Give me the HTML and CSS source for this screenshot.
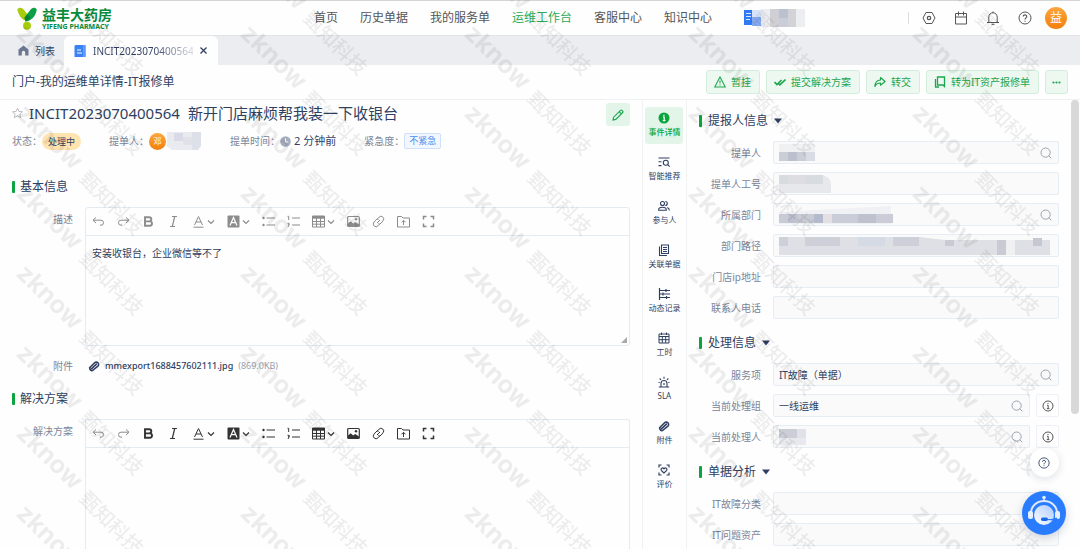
FILE: index.html
```html
<!DOCTYPE html>
<html lang="zh-CN">
<head>
<meta charset="utf-8">
<meta name="viewport" content="width=device-width, initial-scale=1">
<title>IT报修单</title>
<link rel="stylesheet" href="styles.css">
</head>
<body>
<svg class="sprite" aria-hidden="true">
  <symbol id="i-search" viewBox="0 0 12 12"><circle cx="5.6" cy="5.6" r="4.6" fill="none" stroke="currentColor"/><path d="M9 9l2 2" stroke="currentColor" stroke-linecap="round"/></symbol>
  <symbol id="i-info" viewBox="0 0 12 12"><circle cx="6" cy="6" r="5" fill="none" stroke="currentColor"/><path d="M5 5.3h1.2v3.2M4.8 8.6h2.6M6 3v1" fill="none" stroke="currentColor"/></symbol>
  <symbol id="i-help" viewBox="0 0 14 14"><circle cx="7" cy="7" r="6" fill="none" stroke="currentColor"/><path d="M5.2 5.6c0-2.4 3.7-2.3 3.6 0C8.800 6.800 7 7 7 8.500M7 9.700v1" fill="none" stroke="currentColor" stroke-width="1.100"/></symbol>
  <symbol id="i-caret" viewBox="0 0 8 6"><path d="M0 0.500h8L4 5.500z" fill="currentColor"/></symbol>
  <symbol id="i-clip" viewBox="0 0 12 12"><path d="M1.600 7.800L6.600 2.800a2.300 2.300 0 0 1 3.300 3.300L5.200 10a2 2 0 0 1-3-2.600M3.700 8.600L8.400 4.200" fill="none" stroke="currentColor" stroke-width="1.600" stroke-linecap="round"/></symbol>
  <symbol id="e-undo" viewBox="0 0 13 13"><path d="M4 2.500L1 5.200 4 8M1.200 5.200H9a2.500 2.500 0 0 1 0 5H8" fill="none" stroke="currentColor"/></symbol>
  <symbol id="e-redo" viewBox="0 0 13 13"><path d="M9 2.500l3 2.700L9 8M11.800 5.200H4a2.500 2.500 0 0 0 0 5h1" fill="none" stroke="currentColor"/></symbol>
  <symbol id="e-bold" viewBox="0 0 13 13"><path d="M3 2.200h4.200a2 2 0 0 1 0 4.200H3zM3 6.400h4.800a2.200 2.200 0 0 1 0 4.400H3z" fill="none" stroke="currentColor" stroke-width="1.900"/></symbol>
  <symbol id="e-italic" viewBox="0 0 13 13"><path d="M5 1.500h5M3 11.500h5M7.700 1.500L5.300 11.500" fill="none" stroke="currentColor" stroke-width="1.200"/></symbol>
  <symbol id="e-color" viewBox="0 0 13 13"><path d="M2.500 10L6.500 1.500 10.500 10M4 7h5M1.500 12.200h10" fill="none" stroke="currentColor"/></symbol>
  <symbol id="e-fill" viewBox="0 0 13 13"><rect x=".5" y=".5" width="12" height="12" rx="1" fill="currentColor"/><path d="M3 10.500L6.500 2.500 10 10.500M4.200 7.700h4.600" fill="none" stroke="#fff" stroke-width="1.200"/></symbol>
  <symbol id="e-ul" viewBox="0 0 13 13"><path d="M4.500 3H13M4.500 10H13" stroke="currentColor" stroke-width="1.200"/><circle cx="1.500" cy="3" r="1.200" fill="currentColor"/><circle cx="1.500" cy="10" r="1.200" fill="currentColor"/></symbol>
  <symbol id="e-ol" viewBox="0 0 13 13"><path d="M5 3h8M5 10h8" stroke="currentColor" stroke-width="1.200"/><path d="M.5 1.300h1.200v3.700M.5 8.300h1.700v1.500H1M2.200 9.800L1 12" fill="none" stroke="currentColor"/></symbol>
  <symbol id="e-table" viewBox="0 0 13 13"><path d="M.5 1h12v11H.5zM.5 6.500h12M.5 9.200h12M4.500 2v10M8.500 2v10" fill="none" stroke="currentColor"/><path d="M.5 1h12v2.700H.5z" fill="currentColor"/></symbol>
  <symbol id="e-image" viewBox="0 0 13 13"><rect x=".7" y="1.500" width="11.600" height="10" rx="1" fill="none" stroke="currentColor" stroke-width="1.200"/><path d="M1 11V8.500l2.700-2.300 2.500 2.300 2-1.500L12 9.500V11z" fill="currentColor"/><circle cx="9" cy="4.300" r="1.200" fill="currentColor"/></symbol>
  <symbol id="e-link" viewBox="0 0 13 13"><path d="M5.200 4L7 2.200a2.600 2.600 0 0 1 4 3.600L9 8.200a2.400 2.400 0 0 1-2.700.500M7.800 9L6 10.800a2.600 2.600 0 0 1-4-3.600l2-2.400a2.400 2.400 0 0 1 2.700-.500M5 8l3-3" fill="none" stroke="currentColor"/></symbol>
  <symbol id="e-folder" viewBox="0 0 13 13"><path d="M.5 1.500h4l1.500 1.500h6.500v9H.5zM6.500 10V5.500M4.500 7.300l2-2 2 2" fill="none" stroke="currentColor"/></symbol>
  <symbol id="e-full" viewBox="0 0 13 13"><path d="M1.500 4.500v-3h3M8.500 1.500h3v3M11.500 8.500v3h-3M4.500 11.500h-3v-3" fill="none" stroke="currentColor" stroke-width="1.500"/></symbol>
  <symbol id="e-down" viewBox="0 0 8 8"><path d="M1 2.500l3 3 3-3" fill="none" stroke="currentColor" stroke-width="1.200"/></symbol>
</svg>

<header class="top">
  <a class="brand" href="#" aria-label="益丰大药房">
    <svg width="20" height="23" viewBox="0 0 20 23"><path d="M.3 2.500C1.500.2 5 .2 7 3l4 5-3.500 5.500C4.500 12 1.300 7.500.3 2.500z" fill="#a7cc0b"/><path d="M19.800 2.500C18.500.2 15.300.2 13.300 3L8.500 9v5.500c5.500-.5 10.300-5 11.300-12z" fill="#0c9f45"/><path d="M7.300 10.500L11 7.500l2.500 3.500-5 3.500z" fill="#087f36"/><circle cx="10" cy="18.700" r="4" fill="#a7cc0b"/></svg>
    <span class="brand-text"><b>益丰大药房</b><small>YIFENG PHARMACY</small></span>
  </a>
  <nav class="nav">
    <a href="#">首页</a><a href="#">历史单据</a><a href="#">我的服务单</a><a class="on" href="#">运维工作台</a><a href="#">客服中心</a><a href="#">知识中心</a>
    <a class="masked" href="#" aria-label="项目"><svg width="62" height="18" viewBox="0 0 62 18"><path d="M0 1h9v15H0z" fill="#2f7bf5"/><path d="M2 4h5v1H2zM2 7h5v1H2zM2 10h4v1H2z" fill="#d8e7ff"/><path d="M8 1h9v7H8z" fill="#d6e2f7"/><path d="M8 8h9v9H8z" fill="#86aaf0"/><path d="M17 0h9v18h-9z" fill="#eceef3"/><path d="M26 0h9v18h-9z" fill="#cfcfd4"/><path d="M35 0h9v9h-9z" fill="#bac2d2"/><path d="M35 9h9v9h-9z" fill="#c9cdd7"/><path d="M44 0h8v18h-8z" fill="#d2d2d7"/><path d="M52 0h9v18h-9z" fill="#edeef1"/></svg></a>
  </nav>
  <div class="tools">
    <button aria-label="设置"><svg width="14" height="14" viewBox="0 0 14 14"><path d="M4 1.500h6L13 7l-3 5.500H4L1 7z" fill="none" stroke="currentColor" stroke-linejoin="round"/><circle cx="7" cy="7" r="1.700" fill="none" stroke="currentColor" stroke-width="1.200"/></svg></button>
    <button aria-label="日历"><svg width="14" height="14" viewBox="0 0 14 14"><path d="M1.500 2.500h11v10.500h-11zM1.500 6h11M4.500.5v4M9.500.5v4" fill="none" stroke="currentColor"/></svg></button>
    <button aria-label="通知"><svg width="14" height="14" viewBox="0 0 14 14"><path d="M1 11.500h12M2.800 11.500V6a4.200 4.200 0 0 1 8.400 0v5.500M5.500 13.300h3M7 .5v1.500" fill="none" stroke="currentColor"/></svg></button>
    <button aria-label="帮助"><svg width="14" height="14"><use href="#i-help"/></svg></button>
    <span class="avatar">益</span>
  </div>
</header>

<div class="tabs">
  <a class="tab" href="#"><svg width="11" height="11" viewBox="0 0 11 11"><path d="M5.500.5L10.500 4.500V10.500H7.200V7.500a1.700 1.700 0 0 0-3.400 0v3H.5V4.500z" fill="#6b7690"/></svg>列表</a>
  <div class="tab current"><svg width="12" height="12" viewBox="0 0 12 12"><path d="M1.500 0h10v12H.5V1z" fill="#3a82fa"/><path d="M3 5h4M3 8h5" stroke="#fff" stroke-width="1"/><path d="M9 0h2.500v12H9z" fill="#5c9bff"/></svg><span>INCIT2023070400564</span><button aria-label="关闭"><svg width="7" height="7" viewBox="0 0 7 7"><path d="M.5.5l6 6M6.500.5l-6 6" stroke="currentColor" stroke-width="1.300"/></svg></button></div>
</div>

<div class="bar">
  <h2>门户-我的运维单详情-IT报修单</h2>
  <div class="actions">
    <button class="act"><svg width="12" height="12" viewBox="0 0 12 12"><path d="M6 1l5.300 10H.7zM6 4.500v3M6 8.600v1" fill="none" stroke="currentColor" stroke-width="1.100"/></svg>暂挂</button>
    <button class="act"><svg width="12" height="12" viewBox="0 0 12 12"><path d="M.5 6l2.500 2.500L7.500 4M4.500 7.500l1.300 1.300L11.500 3.500" fill="none" stroke="currentColor" stroke-width="1.600"/></svg>提交解决方案</button>
    <button class="act"><svg width="12" height="12" viewBox="0 0 12 12"><path d="M6.500 1.500L11 5.500 6.500 9.200V7C4 7 2 8 1 10.500 1 6.500 3 4.200 6.500 4z" fill="none" stroke="currentColor" stroke-width="1.200" stroke-linejoin="round"/></svg>转交</button>
    <button class="act"><svg width="12" height="12" viewBox="0 0 12 12"><path d="M3.500 1h7v9.500L9 9H3.500zM1.500 3v8H5" fill="none" stroke="currentColor" stroke-width="1.300"/></svg>转为IT资产报修单</button>
    <button class="act more" aria-label="更多"><svg width="9" height="3" viewBox="0 0 9 3"><circle cx="1.500" cy="1.500" r="1.100" fill="currentColor"/><circle cx="4.500" cy="1.500" r="1.100" fill="currentColor"/><circle cx="7.500" cy="1.500" r="1.100" fill="currentColor"/></svg></button>
  </div>
</div>

<div class="work">
  <main class="main">
    <div class="title">
      <svg class="star" width="11" height="20" viewBox="0 0 12 12"><path d="M6 .8l1.600 3.500 3.800.4-2.800 2.600.8 3.800L6 9.200l-3.400 1.900.8-3.800L.6 4.700l3.800-.4z" fill="none" stroke="#b4b8bf"/></svg>
      <h1><span>INCIT2023070400564</span><span>新开门店麻烦帮我装一下收银台</span></h1>
      <button class="edit" aria-label="编辑"><svg width="12" height="12" viewBox="0 0 12 12"><path d="M1 11l.6-2.800L8.500 1.300a1 1 0 0 1 1.400 0l.8.800a1 1 0 0 1 0 1.400L3.800 10.400zM7.200 2.700l2.100 2.100" fill="none" stroke="currentColor" stroke-width="1.100"/></svg></button>
    </div>
    <div class="meta">
      <div>状态：<span class="state">处理中</span></div>
      <div>提单人：<span class="mini">邓</span><svg width="36" height="18" viewBox="0 0 36 18"><path d="M1 0h34v14l-4 4H6L1 14z" fill="#e9ebf0"/><path d="M8 1h9v8H8z" fill="#d9dae6"/><path d="M26 0h9v14l-3 4h-6z" fill="#dde0e9"/><path d="M17 5h9v8h-9z" fill="#e0e2e9"/></svg></div>
      <div>提单时间：<span class="when"><svg width="11" height="11" viewBox="0 0 11 11"><circle cx="5.500" cy="5.500" r="5.300" fill="#a5adbd"/><path d="M5.500 2.500V6h2.700" fill="none" stroke="#fff"/></svg>2 分钟前</span></div>
      <div>紧急度：<span class="urgency">不紧急</span></div>
    </div>

    <h3 class="sec">基本信息</h3>
    <div class="row">
      <label for="desc">描述</label>
      <div class="editor soft">
        <div class="etools">
          <button aria-label="撤销"><svg><use href="#e-undo"/></svg></button><button aria-label="重做"><svg><use href="#e-redo"/></svg></button><button aria-label="加粗"><svg><use href="#e-bold"/></svg></button><button aria-label="斜体"><svg><use href="#e-italic"/></svg></button><button aria-label="文字颜色"><svg><use href="#e-color"/></svg><svg class="dn"><use href="#e-down"/></svg></button><button aria-label="背景颜色"><svg><use href="#e-fill"/></svg><svg class="dn"><use href="#e-down"/></svg></button><button aria-label="无序列表"><svg><use href="#e-ul"/></svg></button><button aria-label="有序列表"><svg><use href="#e-ol"/></svg></button><button aria-label="表格"><svg><use href="#e-table"/></svg><svg class="dn"><use href="#e-down"/></svg></button><button aria-label="图片"><svg><use href="#e-image"/></svg></button><button aria-label="链接"><svg><use href="#e-link"/></svg></button><button aria-label="上传"><svg><use href="#e-folder"/></svg></button><button aria-label="全屏"><svg><use href="#e-full"/></svg></button>
        </div>
        <textarea id="desc">安装收银台，企业微信等不了</textarea>
        <i class="grip"></i>
      </div>
    </div>
    <div class="row attach">
      <span class="lbl">附件</span>
      <div class="file"><svg width="12" height="12"><use href="#i-clip"/></svg><a href="#">mmexport1688457602111.jpg</a><span>(869.0KB)</span></div>
    </div>
    <h3 class="sec second">解决方案</h3>
    <div class="row fill">
      <label for="plan">解决方案</label>
      <div class="editor">
        <div class="etools">
          <button class="off" aria-label="撤销"><svg><use href="#e-undo"/></svg></button><button class="off" aria-label="重做"><svg><use href="#e-redo"/></svg></button><button aria-label="加粗"><svg><use href="#e-bold"/></svg></button><button aria-label="斜体"><svg><use href="#e-italic"/></svg></button><button aria-label="文字颜色"><svg><use href="#e-color"/></svg><svg class="dn"><use href="#e-down"/></svg></button><button aria-label="背景颜色"><svg><use href="#e-fill"/></svg><svg class="dn"><use href="#e-down"/></svg></button><button aria-label="无序列表"><svg><use href="#e-ul"/></svg></button><button aria-label="有序列表"><svg><use href="#e-ol"/></svg></button><button aria-label="表格"><svg><use href="#e-table"/></svg><svg class="dn"><use href="#e-down"/></svg></button><button aria-label="图片"><svg><use href="#e-image"/></svg></button><button aria-label="链接"><svg><use href="#e-link"/></svg></button><button aria-label="上传"><svg><use href="#e-folder"/></svg></button><button aria-label="全屏"><svg><use href="#e-full"/></svg></button>
        </div>
        <textarea id="plan"></textarea>
      </div>
    </div>
  </main>

  <nav class="rail">
    <button class="on"><svg viewBox="0 0 12 12"><circle cx="6" cy="6" r="5.500" fill="currentColor"/><path d="M5 5.200h1.200V8.500M4.800 8.700h2.600M5.900 2.700v1.300" fill="none" stroke="#fff" stroke-width="1.200"/></svg>事件详情</button>
    <button><svg viewBox="0 0 12 12"><path d="M.5 2h11M.5 5.800h3M.5 9.600h3M9.700 8.700l2 2" stroke="currentColor" stroke-width="1.100"/><circle cx="7.800" cy="6.800" r="2.500" fill="none" stroke="currentColor" stroke-width="1.100"/></svg>智能推荐</button>
    <button><svg viewBox="0 0 12 12"><circle cx="4.500" cy="3.500" r="2" fill="none" stroke="currentColor" stroke-width="1.100"/><path d="M.7 10.300V9.500c0-3 7.600-3 7.600 0v.8zM7.300 1.500a2 2 0 0 1 0 4M9.300 7.500c1.500.5 2 1.300 2 3" fill="none" stroke="currentColor" stroke-width="1.100"/></svg>参与人</button>
    <button><svg viewBox="0 0 12 12"><path d="M3.500 1h7v8.500h-7zM1.500 2.500v9H9M5 3.500h4M5 5.500h4M5 7.500h4" fill="none" stroke="currentColor" stroke-width="1.100"/></svg>关联单据</button>
    <button><svg viewBox="0 0 12 12"><path d="M1.500 0v12M1.500 2.500H12M1.500 6H12M1.500 9.500H12M8 1v3M5 4.500v3M8.500 8v3" fill="none" stroke="currentColor" stroke-width="1.200"/></svg>动态记录</button>
    <button><svg viewBox="0 0 12 12"><path d="M1 2h10v9H1zM1 4.500h10M1 7.700h10M4.300 4v7M7.700 4v7M3.500.5V3M8.500.5V3" fill="none" stroke="currentColor"/></svg>工时</button>
    <button><svg viewBox="0 0 12 12"><path d="M.8 11h10.400M3 11V7.500a3 3 0 0 1 6 0V11M6 .8v2M1.700 2.500l1.300 1.300M10.300 2.500L9 3.800M6 7v2M.5 6.500h1.200M10.300 6.500h1.200" fill="none" stroke="currentColor" stroke-width="1.100"/></svg>SLA</button>
    <button><svg><use href="#i-clip"/></svg>附件</button>
    <button><svg viewBox="0 0 12 12"><path d="M1 3.500V1h2.500M8.500 1H11v2.500M11 8.500V11H8.500M3.500 11H1V8.500" fill="none" stroke="currentColor" stroke-width="1.200"/><path d="M6 9L3.300 6.300C2.300 4.500 4.700 3 6 4.800 7.300 3 9.700 4.500 8.700 6.300z" fill="none" stroke="currentColor" stroke-width="1.200"/></svg>评价</button>
  </nav>

  <aside class="side">
    <div class="form">
      <h3 class="sec">提报人信息 <button aria-label="收起"><svg width="8" height="6"><use href="#i-caret"/></svg></button></h3>
      <div class="fields">
        <label for="f1">提单人</label><div class="field"><svg class="mask" width="36" height="18"><path d="M0 0h36v9H0z" fill="#eff1f3"/><path d="M0 8h9v9H0z" fill="#cbcdd7"/><path d="M9 8h9v9H9z" fill="#bcc1cd"/><path d="M18 8h9v9h-9z" fill="#cbced8"/><path d="M27 8h9v9h-9z" fill="#d9dbe5"/></svg><input id="f1"><svg class="mag"><use href="#i-search"/></svg></div>
        <label for="f2">提单人工号</label><div class="field"><svg class="mask" width="52" height="18"><path d="M0 0h44q8 3 8 9v9H0z" fill="#e6e8eb"/><path d="M0 0h9v9H0zM26 0h18v9H26z" fill="#d8dbdf"/><path d="M9 0h17v9H9z" fill="#dedee2"/></svg><input id="f2"></div>
        <label for="f3">所属部门</label><div class="field"><svg class="mask" width="114" height="18"><path d="M0 6L112 0v18H0z" fill="#f0f1f4"/><path d="M0 8h35v9H0z" fill="#c9cbd4"/><path d="M9 8h9v9H9zM79 8h18v9H79z" fill="#bec1ce"/><path d="M35 8h9v9h-9z" fill="#b3bbcc"/><path d="M44 8h9v9h-9z" fill="#e3dfe3"/><path d="M53 8h26v9H53zM97 8h17v9H97z" fill="#cacdd8"/></svg><input id="f3"><svg class="mag"><use href="#i-search"/></svg></div>
        <label for="f4">部门路径</label><div class="field"><svg class="mask" width="272" height="19"><path d="M0 1h140l26 3h105v15H0z" fill="#dfe0e5"/><path d="M0 1h9v9H0zM26 1h35v9H26zM114 1h26v9h-26z" fill="#ced0d9"/><path d="M79 1h27v9H79z" fill="#d5dbe4"/><path d="M166 4h9v6h-9zM218 4h9v15h-9z" fill="#c8cad4"/><path d="M254 2h9v8h-9z" fill="#c5c7d1"/><path d="M227 4h9v15h-9z" fill="#f0f0f3"/></svg><input id="f4"></div>
        <label for="f5">门店ip地址</label><div class="field"><input id="f5"></div>
        <label for="f6">联系人电话</label><div class="field"><input id="f6"></div>
      </div>
      <h3 class="sec">处理信息 <button aria-label="收起"><svg width="8" height="6"><use href="#i-caret"/></svg></button></h3>
      <div class="fields">
        <label for="f7">服务项</label><div class="field"><input id="f7" value="IT故障（单据）"><svg class="mag"><use href="#i-search"/></svg></div>
        <label for="f8">当前处理组</label><div class="pair"><div class="field"><input id="f8" value="一线运维"><svg class="mag"><use href="#i-search"/></svg></div><button class="info" aria-label="详情"><svg width="12" height="12"><use href="#i-info"/></svg></button></div>
        <label for="f9">当前处理人</label><div class="pair"><div class="field"><svg class="mask" width="27" height="16"><path d="M0 0h18v9H0z" fill="#ccced7"/><path d="M18 0h9v9h-9z" fill="#e0e2e8"/><path d="M0 9h27v7H0z" fill="#e8e9ee"/></svg><input id="f9"><svg class="mag"><use href="#i-search"/></svg></div><button class="info" aria-label="详情"><svg width="12" height="12"><use href="#i-info"/></svg></button></div>
      </div>
      <h3 class="sec">单据分析 <button aria-label="收起"><svg width="8" height="6"><use href="#i-caret"/></svg></button></h3>
      <div class="fields">
        <label for="f10">IT故障分类</label><div class="field"><input id="f10"></div>
        <label for="f11">IT问题资产</label><div class="field"><input id="f11"></div>
      </div>
    </div>
    <div class="scroll"><i></i></div>
  </aside>
</div>

<svg class="watermark" aria-hidden="true">
  <defs>
    <g id="wm"><text class="wm-en" transform="translate(15 35) rotate(44)">z<tspan class="wm-k">k</tspan>now</text><text class="wm-cn" transform="translate(78 100) rotate(45)">甄知科技</text></g>
    <pattern id="wmp" width="224" height="80" patternUnits="userSpaceOnUse"><use href="#wm"/><use href="#wm" y="-80"/><use href="#wm" y="-160"/></pattern>
  </defs>
  <rect width="100%" height="100%" fill="url(#wmp)"/>
</svg>

<div class="float">
  <button class="ask" aria-label="帮助"><svg width="12" height="12"><use href="#i-help"/></svg></button>
  <button class="bot" aria-label="智能客服"><svg width="44" height="44" viewBox="0 0 44 44"><defs><linearGradient id="face" x1="0" y1="1" x2="1" y2="0"><stop offset="0" stop-color="#fff"/><stop offset="1" stop-color="#aecbff"/></linearGradient></defs><path d="M9 22a13 12 0 0 1 26 0" fill="none" stroke="#dfeaff" stroke-width="2"/><path d="M22 11V7" stroke="#dfeaff" stroke-width="1.500"/><circle cx="22" cy="6.500" r="1.800" fill="#dfeaff"/><rect x="6" y="20" width="5" height="8" rx="2" fill="#e8f0ff"/><rect x="33" y="20" width="5" height="8" rx="2" fill="#e8f0ff"/><circle cx="22" cy="24" r="10" fill="url(#face)"/><path d="M35 27q-2 2-9 1.500" fill="none" stroke="#2a7cf8" stroke-width="1.200"/><rect x="19" y="26.500" width="7" height="3.500" rx="1.700" fill="#1769e8"/></svg></button>
</div>
</body>
</html>
```

FILE: styles.css
```css
* { box-sizing: border-box; }
body {
  margin: 0;
  height: 100vh;
  display: flex;
  flex-direction: column;
  overflow: hidden;
  background: #fefefe;
  color: #2f3f61;
  font-family: "Noto Sans", "Noto Sans CJK SC", sans-serif;
  font-size: 10px;
  line-height: 16px;
}
a { color: inherit; text-decoration: none; }
button { border: 0; padding: 0; background: none; color: inherit; font: inherit; display: flex; align-items: center; cursor: pointer; }
input, textarea { border: 0; padding: 0; margin: 0; background: none; color: inherit; font: inherit; outline: 0; min-width: 0; }
h1, h2, h3 { margin: 0; font-weight: 400; }
svg { flex: none; display: block; }
.sprite { position: absolute; width: 0; height: 0; }

.top { flex: none; height: 35px; border-top: 1px solid #d5d5d5; display: flex; align-items: center; padding: 0 13px 0 17px; }
.brand { display: flex; align-items: center; gap: 5px; color: #078a3c; }
.brand-text { display: flex; flex-direction: column; }
.brand-text b { font-family: "Noto Sans CJK SC", sans-serif; font-size: 14px; line-height: 17px; font-weight: 700; }
.brand-text small { font-family: "Noto Sans", sans-serif; font-size: 7px; line-height: 8px; font-weight: 700; }
.nav { flex: 1; display: flex; align-items: center; gap: 22px; margin-left: 202px; font-size: 12px; color: #555; white-space: nowrap; }
.nav .on { color: #2bab57; }
.masked { margin-left: 10px; }
.tools { display: flex; align-items: center; gap: 18px; color: #555; padding-left: 14px; position: relative; }
.tools::before { content: ""; position: absolute; left: 0; height: 12px; width: 1px; background: #ddd; }
.avatar { display: grid; place-items: center; width: 22px; height: 22px; margin-left: -5px; border-radius: 50%; background: linear-gradient(#ffa63d, #f27f0c); color: #fff; font-size: 12px; }

.tabs { flex: none; height: 30px; background: #ebedf1; border-top: 1px solid #e2e4e8; display: flex; }
.tab { display: flex; align-items: center; gap: 6px; padding: 0 9px 0 18px; font-size: 10px; }
.current { width: 154px; padding: 0 11px 0 10px; gap: 7px; background: #fefefe; border-radius: 6px 6px 0 0; }
.current span { flex: 1; overflow: hidden; background: linear-gradient(90deg, #2f3f61 60%, #d4d8df); background-clip: text; color: transparent; }

.bar { flex: none; height: 35px; border-bottom: 1px solid #eef0f2; display: flex; align-items: center; justify-content: space-between; padding: 0 12px; }
.bar h2 { font-size: 12px; }
.actions { display: flex; gap: 6px; }
.act { height: 24px; padding: 0 8px 0 7px; gap: 5px; border: 1px solid #d3eedc; border-radius: 3px; background: #edf8f1; color: #1ba64d; white-space: nowrap; }
.more { padding: 0 6px; }

.work { flex: 1; min-height: 0; display: grid; grid-template-columns: minmax(0, 1fr) 44px 36.4%; }
.main { display: flex; flex-direction: column; min-height: 0; padding: 3px 12px 0; border-right: 1px solid #f0f2f4; }
.title { display: flex; align-items: flex-start; gap: 6px; }
.title h1 { flex: 1; display: flex; gap: 8px; font-size: 15px; line-height: 20px; }
.edit { width: 24px; height: 23px; justify-content: center; border-radius: 3px; background: #e3f5e9; color: #1ba64d; }
.meta { display: flex; gap: 28px; height: 18px; margin-top: 6px; color: #7b8599; white-space: nowrap; }
.meta > div { display: flex; align-items: center; }
.state { padding: 0 6px; border-radius: 9px; background: #ffe4b0; color: #2f3f61; font-size: 9px; line-height: 17px; }
.mini { display: grid; place-items: center; width: 17px; height: 17px; border-radius: 50%; background: linear-gradient(#ffa63d, #f27f0c); color: #fff; font-size: 8px; }
.when { display: flex; align-items: center; gap: 3px; color: #2f3f61; font-size: 11px; }
.urgency { padding: 0 4px; border: 1px solid #cfe0fa; border-radius: 2px; background: #f1f6ff; color: #4a8df0; font-size: 9px; line-height: 14px; }

.sec { flex: none; display: flex; align-items: center; gap: 5px; font-size: 12px; line-height: 16px; }
.sec::before { content: ""; width: 3px; height: 12px; border-radius: 1px; background: #0aa53f; }
.main .sec { margin-top: 29px; }
.main .second { margin-top: 17px; }
.row { display: grid; grid-template-columns: 61px minmax(0, 1fr); gap: 12px; margin-top: 12px; }
.row > label, .lbl { text-align: right; color: #7b8599; }
.row > label { padding-top: 4px; }
.editor { position: relative; display: flex; flex-direction: column; border: 1px solid #e3ebf3; border-radius: 3px; }
.etools { flex: none; height: 28px; display: flex; align-items: center; gap: 12px; padding: 0 6px; border-bottom: 1px solid #e3ebf3; color: #333; }
.etools button { gap: 2px; }
.etools svg { width: 13px; height: 13px; }
.etools .dn { width: 8px; height: 8px; }
.etools .off, .soft .etools { color: #8c8c8c; }
.editor textarea { flex: 1; min-height: 109px; padding: 9px 6px; resize: none; }
.grip { position: absolute; right: 2px; bottom: 2px; border: solid; border-width: 0 0 6px 6px; border-color: transparent transparent #aaa; }
.file { display: flex; align-items: center; gap: 5px; padding-left: 3px; font-size: 9px; }
.file a { font-weight: 500; }
.file span { color: #9aa2b1; }
.fill { flex: 1; min-height: 0; }
.fill .editor { border-bottom: 0; border-radius: 3px 3px 0 0; }
.fill textarea { min-height: 0; }

.rail { display: flex; flex-direction: column; align-items: center; gap: 7px; padding: 7px 2px; border-right: 1px solid #f0f2f4; }
.rail button { flex: none; flex-direction: column; gap: 2px; width: 38px; height: 37px; padding: 5px 0 0; border-radius: 3px; font-size: 8px; line-height: 12px; white-space: nowrap; }
.rail svg { width: 12px; height: 12px; }
.rail .on { background: #e3f5e9; color: #0aa53f; font-weight: 500; }

.side { display: flex; min-height: 0; overflow: hidden; }
.form { flex: 1; min-width: 0; padding: 13px 12px 0; }
.form .sec { gap: 6px; }
.fields { display: grid; grid-template-columns: 62px minmax(0, 1fr); gap: 8px 12px; margin: 12px 0 16px; }
.fields label { text-align: right; color: #7b8599; line-height: 25px; height: 23px; white-space: nowrap; }
.field { flex: 1; min-width: 0; height: 23px; display: flex; align-items: center; padding: 0 6px 0 5px; border: 1px solid #e6edf5; border-radius: 2px; background: #fafafa; }
.field input { flex: 1; width: 0; }
.mask { margin-right: -1px; }
.mag { width: 12px; height: 12px; color: #9aa2b1; }
.pair { display: flex; gap: 6px; }
.info { width: 23px; height: 23px; justify-content: center; border: 1px solid #eef1f5; border-radius: 2px; color: #555; }
.scroll { flex: none; width: 9px; }
.scroll i { display: block; width: 8px; height: 70%; border-radius: 4px; background: #d8d8d8; }

.watermark { position: fixed; inset: 0; width: 100%; height: 100%; pointer-events: none; opacity: .07; }
.wm-en { font: 700 25px Inter, sans-serif; }
.wm-k { font-variant-caps: small-caps; }
.wm-cn { font: 500 20px "Noto Sans CJK SC", sans-serif; }

.float { position: fixed; right: 14px; bottom: 14px; display: flex; flex-direction: column; align-items: center; gap: 14px; }
.ask { width: 29px; height: 29px; justify-content: center; border-radius: 50%; background: #fff; box-shadow: 0 2px 8px rgba(30, 50, 90, .15); }
.bot { border-radius: 50%; background: #2a7cff; box-shadow: 0 3px 10px rgba(30, 50, 90, .2); }
```
